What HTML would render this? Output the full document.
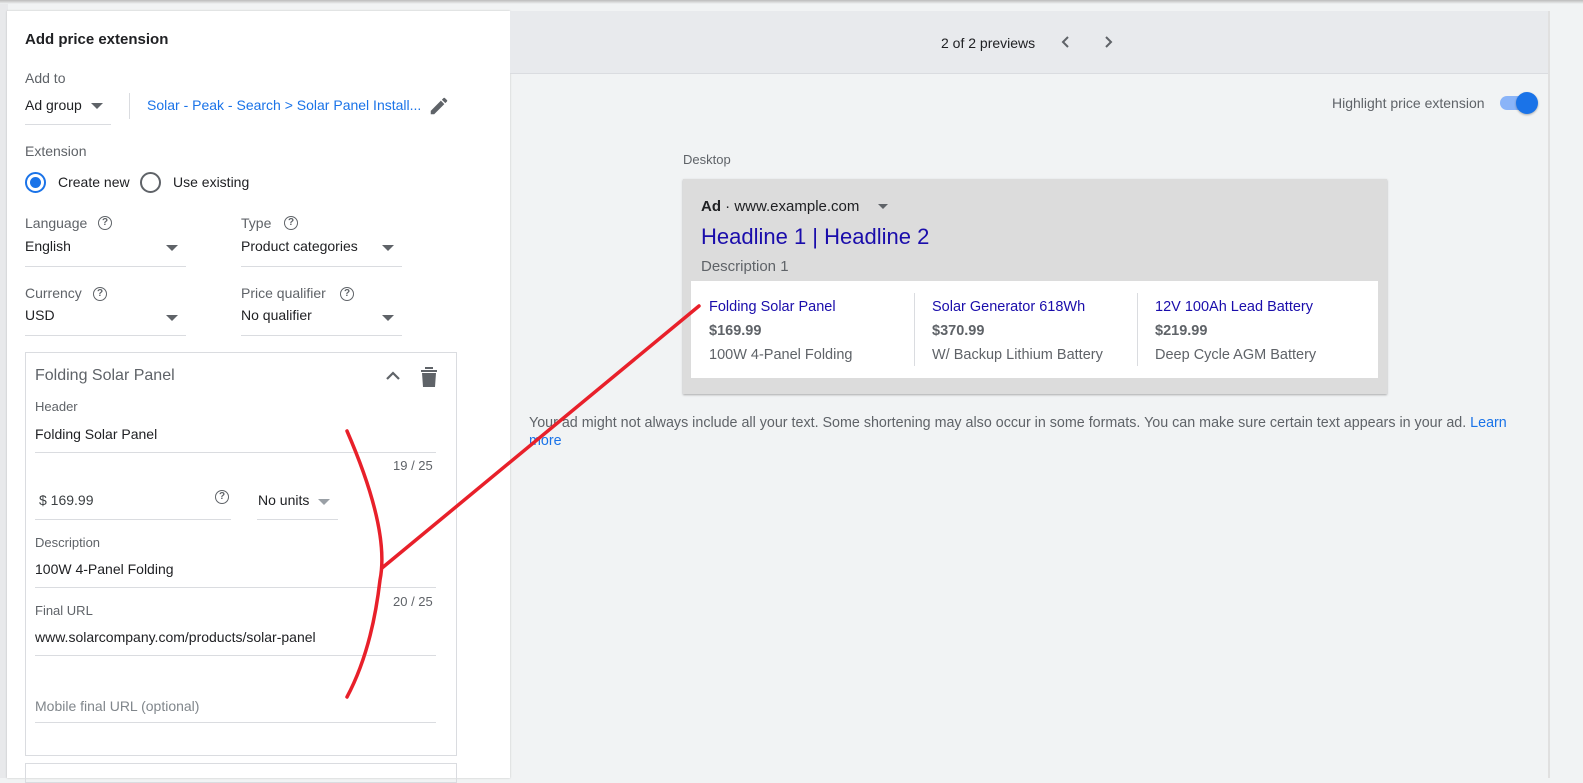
<!DOCTYPE html>
<html><head><meta charset="utf-8"><style>
*{margin:0;padding:0;box-sizing:border-box}
body{width:1583px;height:778px;overflow:hidden;background:#f1f3f4;font-family:"Liberation Sans",Arial,sans-serif;position:relative;color:#202124}
.a{position:absolute;white-space:nowrap}
.lab{font-size:14px;color:#5f6368}
.val{font-size:14px;color:#202124}
.line{position:absolute;height:1px;background:#dadce0}
.tri{position:absolute;width:0;height:0;border-left:6px solid transparent;border-right:6px solid transparent;border-top:6px solid #5f6368}
.q{position:absolute;width:14px;height:14px;border:1.5px solid #5f6368;border-radius:50%;font-size:10px;line-height:11px;text-align:center;color:#5f6368;font-weight:bold}
</style></head><body>
<div class="a" style="left:0;top:0;width:1583px;height:4px;background:linear-gradient(#bbb,#f1f3f4)"></div>
<div class="a" style="left:0;top:4px;width:8px;height:774px;background:#e8e9eb"></div>
<div class="a" style="left:7px;top:11px;width:503px;height:767px;background:#fff;box-shadow:0 0 2px rgba(0,0,0,.2)"></div>
<div class="a" style="left:25px;top:31px;font-size:15px;font-weight:bold;color:#202124">Add price extension</div>
<div class="a lab" style="left:25px;top:70px">Add to</div>
<div class="a val" style="left:25px;top:97px">Ad group</div>
<div class="tri" style="left:91px;top:103px"></div>
<div class="line" style="left:25px;top:124px;width:86px"></div>
<div class="a" style="left:129px;top:93px;width:1px;height:26px;background:#dadce0"></div>
<div class="a" style="left:147px;top:97px;font-size:14px;color:#1a73e8">Solar - Peak - Search &gt; Solar Panel Install...</div>
<svg class="a" style="left:428px;top:95px" width="22" height="22" viewBox="0 0 24 24"><path fill="#5f6368" d="M3 17.25V21h3.75L17.81 9.94l-3.75-3.75L3 17.25zM20.71 7.04a1 1 0 000-1.41l-2.34-2.34a1 1 0 00-1.41 0l-1.830 1.83 3.75 3.75 1.83-1.83z"/></svg>
<div class="a lab" style="left:25px;top:143px">Extension</div>
<div class="a" style="left:25px;top:172px;width:21px;height:21px;border:2px solid #1a73e8;border-radius:50%"></div>
<div class="a" style="left:30px;top:177px;width:11px;height:11px;background:#1a73e8;border-radius:50%"></div>
<div class="a val" style="left:58px;top:174px">Create new</div>
<div class="a" style="left:140px;top:172px;width:21px;height:21px;border:2px solid #5f6368;border-radius:50%"></div>
<div class="a val" style="left:173px;top:174px">Use existing</div>
<div class="a lab" style="left:25px;top:215px">Language</div><div class="q" style="left:98px;top:216px">?</div>
<div class="a val" style="left:25px;top:238px">English</div><div class="tri" style="left:166px;top:245px"></div>
<div class="line" style="left:25px;top:266px;width:161px"></div>
<div class="a lab" style="left:241px;top:215px">Type</div><div class="q" style="left:284px;top:216px">?</div>
<div class="a val" style="left:241px;top:238px">Product categories</div><div class="tri" style="left:382px;top:245px"></div>
<div class="line" style="left:241px;top:266px;width:161px"></div>
<div class="a lab" style="left:25px;top:285px">Currency</div><div class="q" style="left:93px;top:287px">?</div>
<div class="a val" style="left:25px;top:307px">USD</div><div class="tri" style="left:166px;top:315px"></div>
<div class="line" style="left:25px;top:335px;width:161px"></div>
<div class="a lab" style="left:241px;top:285px">Price qualifier</div><div class="q" style="left:340px;top:287px">?</div>
<div class="a val" style="left:241px;top:307px">No qualifier</div><div class="tri" style="left:382px;top:315px"></div>
<div class="line" style="left:241px;top:335px;width:161px"></div>
<div class="a" style="left:25px;top:352px;width:432px;height:404px;border:1px solid #dadce0"></div>
<div class="a" style="left:25px;top:763px;width:432px;height:20px;border:1px solid #dadce0"></div>
<div class="a" style="left:35px;top:367px;font-size:16px;color:#5f6368">Folding Solar Panel</div>
<svg class="a" style="left:384px;top:368px" width="18" height="16" viewBox="0 0 18 16"><path d="M3 11l6-6 6 6" stroke="#5f6368" stroke-width="2.2" fill="none"/></svg>
<svg class="a" style="left:419px;top:365px" width="20" height="22" viewBox="0 0 20 22"><path fill="#5f6368" d="M2 5h16v2H2zM6 2h8v2H6zM3 8h14l-1 14H4z"/></svg>
<div class="a lab" style="left:35px;top:399px;font-size:13px">Header</div>
<div class="a val" style="left:35px;top:426px">Folding Solar Panel</div>
<div class="line" style="left:35px;top:452px;width:401px"></div>
<div class="a lab" style="left:393px;top:458px;font-size:13px">19 / 25</div>
<div class="a val" style="left:39px;top:492px;color:#3c4043">$ 169.99</div>
<div class="q" style="left:215px;top:490px">?</div>
<div class="line" style="left:35px;top:519px;width:196px"></div>
<div class="a val" style="left:258px;top:492px">No units</div><div class="tri" style="left:318px;top:499px;border-top-color:#9aa0a6"></div>
<div class="line" style="left:257px;top:519px;width:81px"></div>
<div class="a lab" style="left:35px;top:535px;font-size:13px">Description</div>
<div class="a val" style="left:35px;top:561px">100W 4-Panel Folding</div>
<div class="line" style="left:35px;top:587px;width:401px"></div>
<div class="a lab" style="left:393px;top:594px;font-size:13px">20 / 25</div>
<div class="a lab" style="left:35px;top:603px;font-size:13px">Final URL</div>
<div class="a val" style="left:35px;top:629px">www.solarcompany.com/products/solar-panel</div>
<div class="line" style="left:35px;top:655px;width:401px"></div>
<div class="a lab" style="left:35px;top:698px;color:#80868b">Mobile final URL (optional)</div>
<div class="line" style="left:35px;top:722px;width:401px"></div>
<div class="a" style="left:510px;top:11px;width:1038px;height:63px;background:#e8eaed;border-bottom:1px solid #dadce0"></div>
<div class="a" style="left:1548px;top:11px;width:35px;height:767px;background:#f1f3f4;border-left:2px solid #e0e0e0"></div>
<div class="a val" style="left:941px;top:35px">2 of 2 previews</div>
<svg class="a" style="left:1058px;top:34px" width="14" height="16"><path d="M10 3L5 8l5 5" stroke="#5f6368" stroke-width="2" fill="none"/></svg>
<svg class="a" style="left:1102px;top:34px" width="14" height="16"><path d="M4 3l5 5-5 5" stroke="#5f6368" stroke-width="2" fill="none"/></svg>
<div class="a lab" style="left:1332px;top:95px">Highlight price extension</div>
<div class="a" style="left:1500px;top:96px;width:34px;height:14px;border-radius:7px;background:#8ab4f8"></div>
<div class="a" style="left:1516px;top:92px;width:22px;height:22px;border-radius:50%;background:#1a73e8;box-shadow:0 1px 2px rgba(0,0,0,.3)"></div>
<div class="a lab" style="left:683px;top:152px;font-size:13px">Desktop</div>
<div class="a" style="left:683px;top:179px;width:704px;height:215px;background:#dcdcdc;box-shadow:0 1px 2px rgba(0,0,0,.3)"></div>
<div class="a" style="left:701px;top:198px;font-size:15px;color:#202124"><b>Ad</b> <span>·</span> www.example.com</div>
<div class="tri" style="left:878px;top:204px;border-left-width:5px;border-right-width:5px;border-top-width:5px"></div>
<div class="a" style="left:701px;top:224px;font-size:22px;color:#1a0dab">Headline 1 | Headline 2</div>
<div class="a" style="left:701px;top:258px;font-size:15px;color:#5f6368">Description 1</div>
<div class="a" style="left:691px;top:281px;width:687px;height:97px;background:#fff"></div>
<div class="a" style="left:914px;top:293px;width:1px;height:73px;background:#dadce0"></div>
<div class="a" style="left:1137px;top:293px;width:1px;height:73px;background:#dadce0"></div>
<div class="a" style="left:709px;top:295px;font-size:14.5px;line-height:24px;color:#5f6368">
<div style="color:#1a0dab">Folding Solar Panel</div><div style="font-weight:bold">$169.99</div><div>100W 4-Panel Folding</div></div>
<div class="a" style="left:932px;top:295px;font-size:14.5px;line-height:24px;color:#5f6368">
<div style="color:#1a0dab">Solar Generator 618Wh</div><div style="font-weight:bold">$370.99</div><div>W/ Backup Lithium Battery</div></div>
<div class="a" style="left:1155px;top:295px;font-size:14.5px;line-height:24px;color:#5f6368">
<div style="color:#1a0dab">12V 100Ah Lead Battery</div><div style="font-weight:bold">$219.99</div><div>Deep Cycle AGM Battery</div></div>
<div class="a" style="left:529px;top:414px;font-size:14.3px;line-height:18px;color:#5f6368">Your ad might not always include all your text. Some shortening may also occur in some formats. You can make sure certain text appears in your ad. <span style="color:#1a73e8">Learn</span><br><span style="color:#1a73e8">more</span></div>
<svg class="a" style="left:0;top:0" width="1583" height="778"><g stroke="#e8202a" stroke-width="3.5" fill="none" stroke-linecap="round"><path d="M347 431 Q390 530 380 580 Q372 650 347 697"/><path d="M382 568 L699 306"/></g></svg>
</body></html>
